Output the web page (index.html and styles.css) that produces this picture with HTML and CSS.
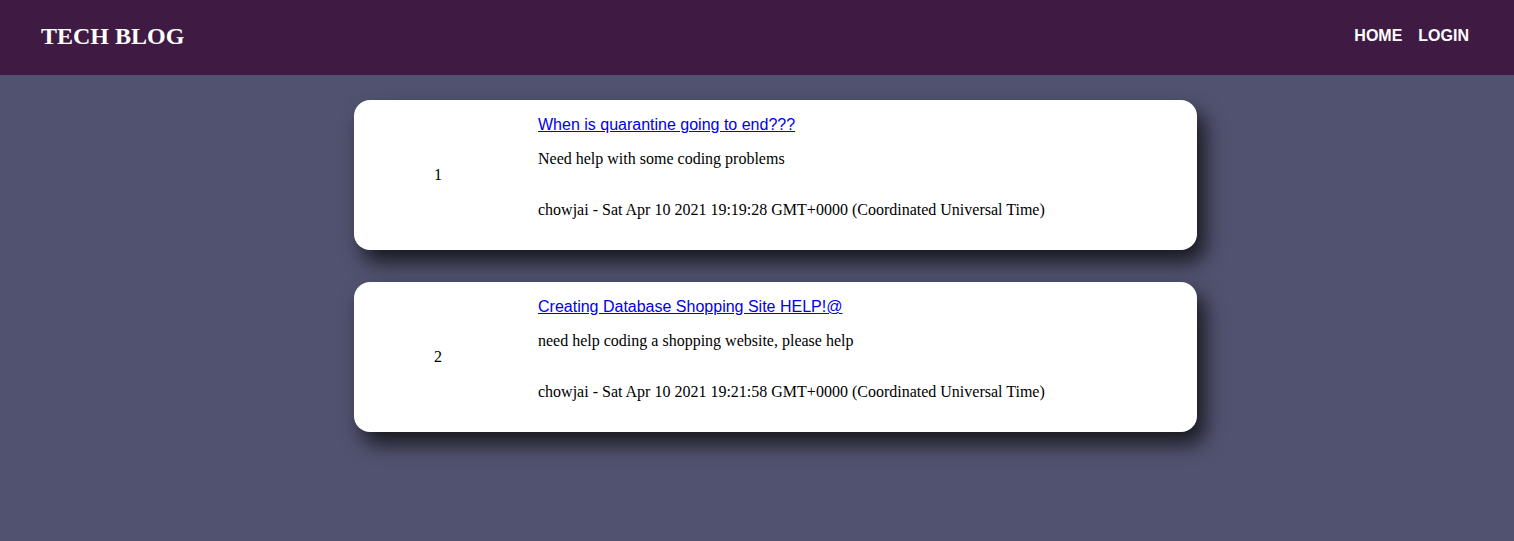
FILE: index.html
```html
<!DOCTYPE html>
<html>
<head>
<meta charset="utf-8">
<title>Tech Blog</title>
<link rel="stylesheet" href="styles.css">
</head>
<body>
<header class="topbar">
  <h1 class="brand">TECH BLOG</h1>
  <nav class="nav">
    <a class="nav-link" href="#">HOME</a>
    <a class="nav-link" href="#">LOGIN</a>
  </nav>
</header>
<main class="posts">
  <article class="card">
    <div class="card-num">1</div>
    <div class="card-body">
      <a class="card-title" href="#">When is quarantine going to end???</a>
      <p class="card-text">Need help with some coding problems</p>
      <p class="card-meta">chowjai - Sat Apr 10 2021 19:19:28 GMT+0000 (Coordinated Universal Time)</p>
    </div>
  </article>
  <article class="card">
    <div class="card-num">2</div>
    <div class="card-body">
      <a class="card-title" href="#">Creating Database Shopping Site HELP!@</a>
      <p class="card-text">need help coding a shopping website, please help</p>
      <p class="card-meta">chowjai - Sat Apr 10 2021 19:21:58 GMT+0000 (Coordinated Universal Time)</p>
    </div>
  </article>
</main>
</body>
</html>
```
FILE: styles.css
```css
html, body {
  margin: 0;
  padding: 0;
}
body {
  background: #51526f;
  font-family: "Liberation Serif", "Times New Roman", serif;
  font-size: 16px;
  color: #000;
  min-height: 541px;
}
.topbar {
  height: 75px;
  box-sizing: border-box;
  background: #3f1b43;
  display: flex;
  align-items: center;
  justify-content: space-between;
  padding: 0 45px 3px 41px;
}
.brand {
  margin: 0;
  font-family: "Liberation Serif", "Times New Roman", serif;
  font-weight: bold;
  font-size: 24px;
  color: #fff;
}
.nav {
  display: flex;
  gap: 16px;
}
.nav-link {
  font-family: "Liberation Sans", Arial, sans-serif;
  font-weight: bold;
  font-size: 16px;
  color: #fff;
  text-decoration: none;
}
.posts {
  display: flex;
  flex-direction: column;
  align-items: center;
  gap: 32px;
  padding: 25px 0 0 37px;
}
.card {
  width: 843px;
  height: 150px;
  box-sizing: border-box;
  background: #fff;
  border-radius: 16px;
  box-shadow: 8px 12px 20px rgba(0, 0, 0, 0.7);
  display: flex;
  align-items: stretch;
}
.card-num {
  width: 168px;
  display: flex;
  align-items: center;
  justify-content: center;
  line-height: 18px;
}
.card-body {
  margin-left: 16px;
  padding-top: 16px;
  display: flex;
  flex-direction: column;
  align-items: flex-start;
}
.card-title {
  font-family: "Liberation Sans", Arial, sans-serif;
  font-size: 16px;
  line-height: 18px;
  color: #0000ee;
  text-decoration: underline;
}
.card-text {
  margin: 16px 0 0;
  line-height: 18px;
}
.card-meta {
  margin: 33px 0 0;
  line-height: 18px;
}
```
